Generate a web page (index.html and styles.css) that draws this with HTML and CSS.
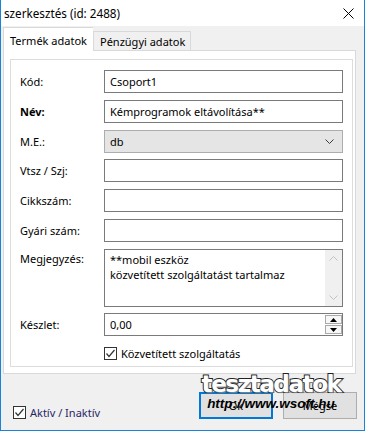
FILE: index.html
```html
<!DOCTYPE html>
<html lang="hu">
<head>
<meta charset="utf-8">
<title>szerkesztés</title>
<link rel="stylesheet" href="styles.css">
</head>
<body>
<div class="window">
  <div class="titlebar">
    <span class="title">szerkesztés (id: 2488)</span>
    <svg class="close" width="11" height="11" viewBox="0 0 11 11"><path d="M0.5 0.5 L10.5 10.5 M10.5 0.5 L0.5 10.5" stroke="#000" stroke-width="1" fill="none"/></svg>
  </div>
  <div class="tabs">
    <div class="tab active">Termék adatok</div>
    <div class="tab">Pénzügyi adatok</div>
  </div>
  <div class="page">
    <div class="group">
      <div class="form">
        <div class="label">Kód:</div>
        <div class="input">Csoport1</div>

        <div class="label bold">Név:</div>
        <div class="input">Kémprogramok eltávolítása**</div>

        <div class="label">M.E.:</div>
        <div class="input select">db
          <svg class="chev" width="9" height="5" viewBox="0 0 9 5"><path d="M0.5 0.5 L4.5 4.5 L8.5 0.5" stroke="#3c3c3c" fill="none"/></svg>
        </div>

        <div class="label">Vtsz / Szj:</div>
        <div class="input"></div>

        <div class="label">Cikkszám:</div>
        <div class="input"></div>

        <div class="label">Gyári szám:</div>
        <div class="input"></div>

        <div class="label top">Megjegyzés:</div>
        <div class="input memo">
          <div class="memo-text">**mobil eszköz<br>közvetített szolgáltatást tartalmaz</div>
          <div class="vscroll">
            <svg width="9" height="5" viewBox="0 0 9 5"><path d="M0.5 4.5 L4.5 0.5 L8.5 4.5" stroke="#c2c2c2" fill="none"/></svg>
            <svg width="9" height="5" viewBox="0 0 9 5"><path d="M0.5 0.5 L4.5 4.5 L8.5 0.5" stroke="#c2c2c2" fill="none"/></svg>
          </div>
        </div>

        <div class="label">Készlet:</div>
        <div class="input numeric">
          <span class="num">0,00</span>
          <div class="spin">
            <span><svg width="7" height="4" viewBox="0 0 7 4"><path d="M0 4 L3.5 0 L7 4 Z" fill="#000"/></svg></span>
            <span><svg width="7" height="4" viewBox="0 0 7 4"><path d="M0 0 L3.5 4 L7 0 Z" fill="#000"/></svg></span>
          </div>
        </div>

        <div class="label"></div>
        <div class="check">
          <span class="box"><svg width="11" height="11" viewBox="0 0 11 11"><path d="M1.5 5.5 L4 8.5 L9.5 2" stroke="#333" stroke-width="1.2" fill="none"/></svg></span>
          <span>Közvetített szolgáltatás</span>
        </div>
      </div>
    </div>
  </div>
  <div class="footer">
    <div class="check active-check">
      <span class="box"><svg width="11" height="11" viewBox="0 0 11 11"><path d="M1.5 5.5 L4 8.5 L9.5 2" stroke="#333" stroke-width="1.2" fill="none"/></svg></span>
      <span class="purple">Aktív / Inaktív</span>
    </div>
    <div class="buttons">
      <div class="btn ok">Ok</div>
      <div class="btn">Mégse</div>
    </div>
  </div>
  <div class="watermark">
    <div class="wm-big">tesztadatok</div>
    <div class="wm-url">http://www.wsoft.hu</div>
  </div>
</div>
</body>
</html>
```

FILE: styles.css
```css
* { box-sizing: border-box; }
html, body { margin: 0; padding: 0; background: #fff; }
body {
  font-family: "Noto Sans", "Open Sans", sans-serif;
  font-size: 11px;
  color: #000;
  width: 365px;
  height: 431px;
  overflow: hidden;
}
.window {
  position: relative;
  width: 365px;
  height: 431px;
  border: 1px solid #1883d7;
  border-top: none;
  background: #f0f0f0;
  display: flex;
  flex-direction: column;
}
.titlebar {
  height: 26px;
  flex: none;
  background: #fff;
  display: flex;
  align-items: center;
  justify-content: space-between;
  padding: 0 10px 0 3px;
  font-size: 11.7px;
}
.close { display: block; margin-top: 1px; }

.tabs {
  height: 24px;
  flex: none;
  display: flex;
  align-items: flex-end;
  padding-left: 2px;
  position: relative;
  z-index: 1;
}
.tab {
  height: 19px;
  width: 98px;
  padding-left: 6px;
  border: 1px solid #d9d9d9;
  border-bottom: none;
  background: #f0f0f0;
  display: flex;
  align-items: center;
  white-space: nowrap;
}
.tab.active {
  height: 24px;
  width: 90px;
  background: #fff;
  margin-bottom: -1px;
  border-right: none;
  padding-top: 1px;
}
.page {
  margin: 0 8px 0 2px;
  height: 324px;
  border: 1px solid #d9d9d9;
  background: #fff;
  padding: 8px 2px 6px 6px;
}
.group {
  height: 100%;
  border: 1px solid #dcdcdc;
  padding: 10px 0 0 9px;
}
.form {
  display: grid;
  grid-template-columns: 84px 239px;
  row-gap: 6.75px;
  align-items: center;
}
.label { white-space: nowrap; }
.label.bold { font-weight: bold; }
.label.top { align-self: start; padding-top: 2px; }
.input {
  height: 23px;
  border: 1px solid #7a7a7a;
  background: #fff;
  padding-left: 5px;
  display: flex;
  align-items: center;
  white-space: nowrap;
}
.select {
  background: #e5e5e5;
  border-color: #adadad;
  justify-content: space-between;
  padding-right: 8px;
}
.memo {
  height: 58px;
  align-items: stretch;
  padding-left: 5px;
  justify-content: space-between;
}
.memo-text { padding-top: 2px; line-height: 15px; }
.vscroll {
  width: 17px;
  background: #f0f0f0;
  display: flex;
  flex-direction: column;
  justify-content: space-between;
  align-items: center;
  padding: 6px 0 6px;
}
.vscroll svg { display: block; }
.numeric { justify-content: space-between; padding-right: 0; }
.spin {
  width: 17px;
  height: 100%;
  display: flex;
  flex-direction: column;
  gap: 1px;
  padding: 1px 0;
}
.spin span {
  flex: 1;
  border: 1px solid #a9a9a9;
  background: #f7f7f7;
  display: flex;
  align-items: center;
  justify-content: center;
}
.spin svg { display: block; }

.check {
  display: flex;
  align-items: center;
  gap: 4px;
  margin-top: 3px;
  white-space: nowrap;
}
.box {
  width: 13px;
  height: 13px;
  border: 1px solid #333;
  background: #fff;
  display: flex;
  align-items: center;
  justify-content: center;
}
.box svg { display: block; }

.footer {
  flex: 1;
  display: flex;
  justify-content: space-between;
  align-items: flex-start;
  padding: 18px 7px 0 12px;
}
.active-check { margin-top: 13px; }
.purple { color: #2b1f66; }
.buttons { display: flex; gap: 10px; }
.btn {
  width: 74px;
  height: 27px;
  border: 1px solid #adadad;
  background: #e1e1e1;
  display: flex;
  align-items: center;
  justify-content: center;
}
.btn.ok { border: 2px solid #0078d7; }

.watermark {
  position: absolute;
  left: 193px;
  top: 371px;
  width: 154px;
  text-align: center;
  pointer-events: none;
}
.wm-big {
  font-family: "DejaVu Sans", sans-serif;
  font-weight: bold;
  font-size: 23px;
  letter-spacing: -1.4px;
  line-height: 26px;
  color: #fff;
  -webkit-text-stroke: 2px #222;
  paint-order: stroke fill;
  text-shadow: 1px 1px 1px #888;
}
.wm-url {
  font-family: "Liberation Sans", sans-serif;
  font-weight: bold;
  font-style: italic;
  font-size: 13.5px;
  line-height: 15px;
  color: #000;
  margin-top: -1px;
}
```
